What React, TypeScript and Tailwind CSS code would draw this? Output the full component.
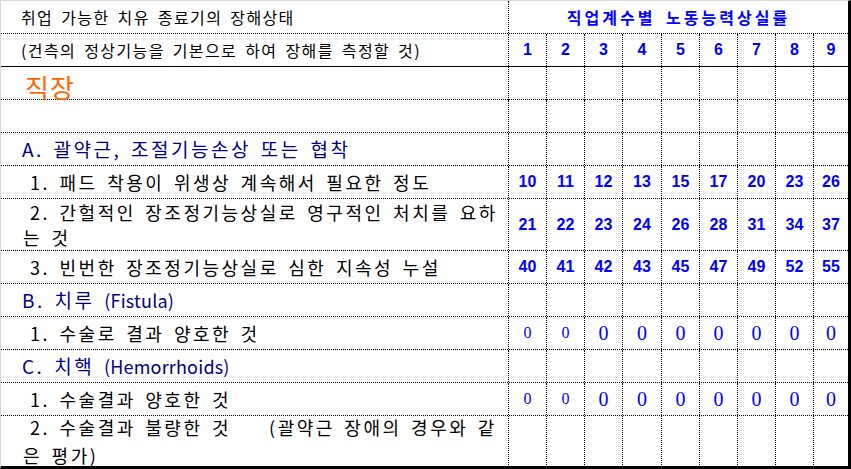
import React from 'react';

const grid = 'grid grid-cols-[508px_38px_38px_38px_39px_38px_38px_38px_38px_34px]';
const cell = 'flex items-center justify-center border-r border-dotted border-black';
const lastCell = 'flex items-center justify-center';

const numCls = "font-['Liberation_Sans',Arial,sans-serif] font-bold text-[16px] text-[#0000ff]";
const itemCls = "pl-[22px] text-[18px] tracking-[2.5px] [word-spacing:3px] text-black whitespace-nowrap";
const headCls = "pl-[21px] text-[19px] tracking-[2.5px] [word-spacing:3px] text-[#000080] whitespace-nowrap";
const latinCls = 'text-[18px] tracking-[0.2px]';

function Nums({ values }: { values?: number[] }) {
  return (
    <>
      {Array.from({ length: 9 }).map((_, i) => (
        <div key={i} className={i === 8 ? lastCell : cell}>
          {values ? <span className={numCls}>{values[i]}</span> : null}
        </div>
      ))}
    </>
  );
}

function Zeros() {
  return (
    <>
      {Array.from({ length: 9 }).map((_, i) => (
        <div key={i} className={i === 8 ? lastCell : cell}>
          {i < 2 ? (
            <span className="font-['Liberation_Serif',serif] text-[16px] text-[#0000ff] leading-none">0</span>
          ) : (
            <span className="font-['Liberation_Serif',serif] text-[20px] text-[#0000ff] leading-none">0</span>
          )}
        </div>
      ))}
    </>
  );
}

export default function App() {
  return (
    <div className="w-[851px] h-[469px] bg-white border-t border-l border-t-[#d8d8d8] border-l-[#d8d8d8] border-r-[3px] border-b-[3px] border-r-black border-b-black overflow-hidden font-['Noto_Sans_CJK_KR',sans-serif]">
      {/* header */}
      <div className={`${grid} h-[33px] border-b border-dotted border-black`}>
        <div className="flex items-center border-r border-dotted border-black pl-[20px] text-[16px] tracking-[1.4px] [word-spacing:3px] whitespace-nowrap">
          취업 가능한 치유 종료기의 장해상태
        </div>
        <div className="col-span-9 flex items-center justify-center font-bold text-[16px] tracking-[3px] [word-spacing:4px] text-[#0000ff]">
          직업계수별 노동능력상실률
        </div>
      </div>
      <div className={`${grid} h-[33px] border-b border-solid border-black`}>
        <div className="flex items-center border-r border-dotted border-black pl-[20px] text-[16px] tracking-[1.4px] [word-spacing:3px] whitespace-nowrap">
          (건측의 정상기능을 기본으로 하여 장해를 측정할 것)
        </div>
        <Nums values={[1, 2, 3, 4, 5, 6, 7, 8, 9]} />
      </div>

      <div className={`${grid} h-[33px] border-b border-dotted border-black`}>
        <div className="flex items-center border-r border-dotted border-black pl-[24px] text-[26px] tracking-[1px] text-[#ff6600]">
          직장
        </div>
        <Nums />
      </div>
      <div className={`${grid} h-[33px] border-b border-dotted border-black`}>
        <div className="border-r border-dotted border-black" />
        <Nums />
      </div>

      {/* A */}
      <div className={`${grid} h-[33px] border-b border-dotted border-black`}>
        <div className={`flex items-center border-r border-dotted border-black ${headCls}`}>
          A. 괄약근, 조절기능손상 또는 협착
        </div>
        <Nums />
      </div>
      <div className={`${grid} h-[33px] border-b border-dotted border-black`}>
        <div className={`flex items-center border-r border-dotted border-black ${itemCls}`}>
          <span className="pl-[7px]">1. 패드 착용이 위생상 계속해서 필요한 정도</span>
        </div>
        <Nums values={[10, 11, 12, 13, 15, 17, 20, 23, 26]} />
      </div>
      <div className={`${grid} h-[52px] border-b border-dotted border-black`}>
        <div className={`flex flex-col justify-center border-r border-dotted border-black leading-[25px] ${itemCls}`}>
          <span className="pl-[7px]">2. 간헐적인 장조정기능상실로 영구적인 처치를 요하</span>
          <span>는 것</span>
        </div>
        <Nums values={[21, 22, 23, 24, 26, 28, 31, 34, 37]} />
      </div>
      <div className={`${grid} h-[33px] border-b border-dotted border-black`}>
        <div className={`flex items-center border-r border-dotted border-black ${itemCls}`}>
          <span className="pl-[7px]">3. 빈번한 장조정기능상실로 심한 지속성 누설</span>
        </div>
        <Nums values={[40, 41, 42, 43, 45, 47, 49, 52, 55]} />
      </div>

      {/* B */}
      <div className={`${grid} h-[33px] border-b border-dotted border-black`}>
        <div className={`flex items-center border-r border-dotted border-black ${headCls}`}>
          B. 치루&nbsp;<span className={latinCls}>(Fistula)</span>
        </div>
        <Nums />
      </div>
      <div className={`${grid} h-[33px] border-b border-dotted border-black`}>
        <div className={`flex items-center border-r border-dotted border-black ${itemCls}`}>
          <span className="pl-[7px]">1. 수술로 결과 양호한 것</span>
        </div>
        <Zeros />
      </div>

      {/* C */}
      <div className={`${grid} h-[33px] border-b border-dotted border-black`}>
        <div className={`flex items-center border-r border-dotted border-black ${headCls}`}>
          C. 치핵&nbsp;<span className={latinCls}>(Hemorrhoids)</span>
        </div>
        <Nums />
      </div>
      <div className={`${grid} h-[33px] border-b border-dotted border-black`}>
        <div className={`flex items-center border-r border-dotted border-black ${itemCls}`}>
          <span className="pl-[7px]">1. 수술결과 양호한 것</span>
        </div>
        <Zeros />
      </div>
      <div className={`${grid} h-[50px]`}>
        <div className={`flex flex-col justify-start border-r border-dotted border-black leading-[28px] ${itemCls}`}>
          <span className="pl-[7px] -mt-[3px]">
            2. 수술결과 불량한 것<span className="pl-[38px]">(괄약근 장애의 경우와 같</span>
          </span>
          <span>은 평가)</span>
        </div>
        <Nums />
      </div>
    </div>
  );
}
